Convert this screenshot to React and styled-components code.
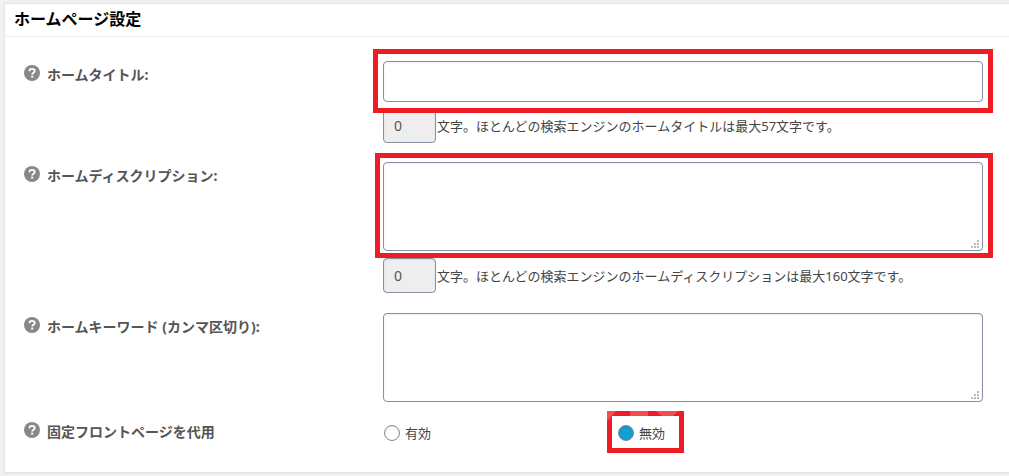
import React from "react";
import styled, { createGlobalStyle } from "styled-components";

const Global = createGlobalStyle`
  * { box-sizing: border-box; }
  body {
    margin: 0;
    background: #f1f1f1;
    color: #444;
    font: 13px/20px "Noto Sans", "Noto Sans CJK JP", sans-serif;
  }
`;

const Page = styled.main`
  padding: 3px 0 3px 4px;
  overflow: hidden;
`;

const Panel = styled.section`
  background: #fff;
  border: 1px solid #e5e5e5;
  border-right: 0;
  box-shadow: 0 1px 1px rgba(0, 0, 0, 0.04);
`;

const PanelTitle = styled.h2`
  margin: 0;
  padding: 3px 9px 5px;
  border-bottom: 1px solid #eee;
  color: #000;
  font-size: 16px;
  line-height: 24px;
  font-weight: 700;
`;

const Form = styled.form`
  padding: 24px 26px 29px 19px;
`;

const Row = styled.div`
  display: grid;
  grid-template-columns: 359px minmax(0, 1fr);
  align-items: start;
  margin-top: ${(p) => p.$space || 0}px;
`;

const Caption = styled.div`
  display: flex;
  gap: 7px;
  padding-top: 4px;
  color: #555;
  font-size: 14px;
  font-weight: 700;
`;

const HelpButton = styled.button`
  display: block;
  flex: none;
  width: 16px;
  height: 16px;
  padding: 0;
  border: 0;
  background: none;
  svg { display: block; }
`;

const Stack = styled.div`
  display: flex;
  flex-direction: column;
  gap: 6px;
`;

const Marked = styled.div`
  position: relative;
  display: block;
  justify-self: ${(p) => (p.$fit ? "start" : "stretch")};
`;

const Frame = styled.span`
  position: absolute;
  inset: ${(p) => p.$inset};
  border: 5px solid #ee1c24;
  pointer-events: none;
  z-index: 1;
`;

const Sheen = styled.svg`
  position: absolute;
  top: -5px;
  left: -5px;
`;

const field = `
  display: block;
  border: 1px solid #8590a0;
  border-radius: 4px;
  background: #fff;
  box-shadow: inset 0 1px 2px rgba(0, 0, 0, 0.07);
  font: inherit;
  color: #555;
  outline: none;
`;

const TextInput = styled.input`
  ${field}
  width: 100%;
  height: 41px;
  padding: 4px 10px;
`;

const AreaBox = styled.div`
  position: relative;
  padding-bottom: 1px;
`;

const TextArea = styled.textarea`
  ${field}
  width: 100%;
  height: 89px;
  padding: 4px 10px;
  resize: none;
`;

const Grip = styled.svg`
  position: absolute;
  right: 4px;
  bottom: 4px;
`;

const Hint = styled.label`
  display: flex;
  align-items: center;
  gap: 1px;
`;

const Counter = styled.input`
  ${field}
  width: 53px;
  height: 35px;
  padding: 0 10px;
  background: #eee;
  font-size: 14px;
`;

const Options = styled.div`
  display: grid;
  grid-template-columns: 39% 1fr;
  align-items: start;
  padding-top: 5px;
`;

const Option = styled.label`
  display: flex;
  align-items: center;
  gap: 5px;
  padding-left: 1px;
`;

const Radio = styled.input`
  appearance: none;
  width: 16px;
  height: 16px;
  margin: 0;
  border: 1px solid #7e8993;
  border-radius: 50%;
  background: #fff;
  box-shadow: inset 0 1px 2px rgba(0, 0, 0, 0.1);
  &:checked { background: #119fd5; }
`;

function Help({ topic }) {
  return (
    <HelpButton type="button" aria-label={`${topic} ?`}>
      <svg width="16" height="16" viewBox="0 0 16 16">
        <circle cx="8" cy="8" r="8" fill="#888" />
        <path d="M5.4 6.3C5.4 4.6 6.5 3.9 8.1 3.9S10.7 4.7 10.7 6.1C10.7 7.8 8.2 7.8 8.2 9.6" fill="none" stroke="#fff" strokeWidth="1.9" />
        <rect x="7.2" y="10.6" width="2" height="2" fill="#fff" />
      </svg>
    </HelpButton>
  );
}

function Area({ id }) {
  return (
    <AreaBox>
      <TextArea id={id} />
      <Grip width="8" height="8" viewBox="0 0 8 8" fill="#bcbcbc">
        <path d="M6 0h2v2h-2zM3 3h2v2h-2zM6 3h2v2h-2zM0 6h2v2h-2zM3 6h2v2h-2zM6 6h2v2h-2z" />
      </Grip>
    </AreaBox>
  );
}

function Field({ label, id, space, children }) {
  return (
    <Row $space={space}>
      <Caption>
        <Help topic={label} />
        <label htmlFor={id}>{label}</label>
      </Caption>
      {children}
    </Row>
  );
}

export default function App() {
  return (
    <Page>
      <Global />
      <Panel>
        <PanelTitle>ホームページ設定</PanelTitle>
        <Form>
          <Field label="ホームタイトル:" id="title">
            <Stack>
              <Marked>
                <TextInput id="title" type="text" />
                <Frame $inset="-12px -10px -11px" />
              </Marked>
              <Hint>
                <Counter value="0" readOnly />
                文字。ほとんどの検索エンジンのホームタイトルは最大57文字です。
              </Hint>
            </Stack>
          </Field>
          <Field label="ホームディスクリプション:" id="description" space={19}>
            <Stack>
              <Marked>
                <Area id="description" />
                <Frame $inset="-9px -10px -6px -8px" />
              </Marked>
              <Hint>
                <Counter value="0" readOnly />
                文字。ほとんどの検索エンジンのホームディスクリプションは最大160文字です。
              </Hint>
            </Stack>
          </Field>
          <Field label="ホームキーワード (カンマ区切り):" id="keywords" space={20}>
            <Area id="keywords" />
          </Field>
          <Field label="固定フロントページを代用" id="static-on" space={15}>
            <Options>
              <Option>
                <Radio id="static-on" type="radio" name="static" />
                有効
              </Option>
              <Marked $fit>
                <Option>
                  <Radio type="radio" name="static" defaultChecked />
                  無効
                </Option>
                <Frame $inset="-12px -19px -10px -10px">
                  <Sheen width="77" height="10" viewBox="0 0 77 10" fill="#fff" fillOpacity="0.22">
                    <path d="M0 0H9L5 5L0 10ZM23 0H41V5H23ZM49 0H71L66 5H55Z" />
                  </Sheen>
                </Frame>
              </Marked>
            </Options>
          </Field>
        </Form>
      </Panel>
    </Page>
  );
}
